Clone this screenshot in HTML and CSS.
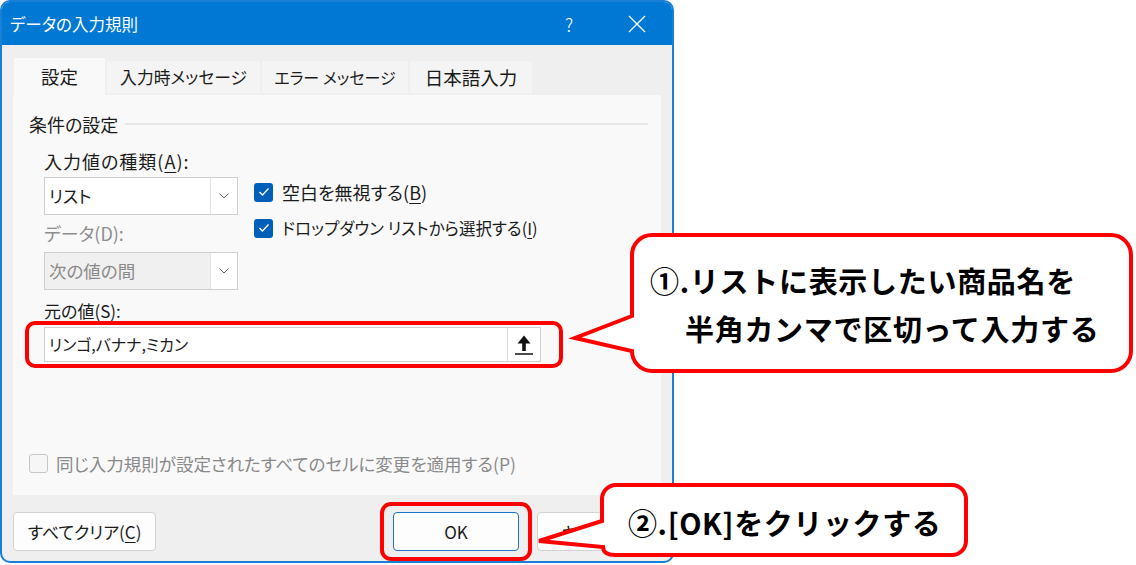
FILE: index.html
```html
<!DOCTYPE html>
<html lang="ja">
<head>
<meta charset="utf-8">
<title>データの入力規則</title>
<link rel="stylesheet" href="styles.css">
</head>
<body>
<div class="page">
  <div class="dialog">
    <div class="titlebar">
      <span class="title">データの入力規則</span>
      <span class="help">?</span>
      <span class="close"><svg width="18" height="18" viewBox="0 0 18 18"><path d="M1 1 L17 17 M17 1 L1 17" stroke="#fff" stroke-width="1.3" fill="none"/></svg></span>
    </div>
    <div class="body">
      <div class="tabs">
        <div class="tab active w1">設定</div>
        <div class="tab w2">入力時メッセージ</div>
        <div class="tab w3">エラー メッセージ</div>
        <div class="tab w4">日本語入力</div>
      </div>
      <div class="panel">
        <div class="group-title"><span>条件の設定</span><span class="rule"></span></div>
        <div class="form">
          <div class="main-row">
            <div class="left-col">
              <div class="label l1">入力値の種類(<u>A</u>):</div>
              <div class="combo c1"><span class="combo-text">リスト</span><span class="drop"><svg width="10" height="6" viewBox="0 0 10 6"><path d="M0.5 0.5 L5 5 L9.5 0.5" stroke="#606060" stroke-width="1" fill="none"/></svg></span></div>
              <div class="label disabled l2">データ(D):</div>
              <div class="combo is-disabled c2"><span class="combo-text">次の値の間</span><span class="drop"><svg width="10" height="6" viewBox="0 0 10 6"><path d="M0.5 0.5 L5 5 L9.5 0.5" stroke="#606060" stroke-width="1" fill="none"/></svg></span></div>
            </div>
            <div class="right-col">
              <div class="check-row r1"><span class="checkbox checked"><svg width="12" height="10" viewBox="0 0 12 10"><path d="M1.5 5 L4.5 8 L10.5 1.5" stroke="#fff" stroke-width="1.3" fill="none"/></svg></span><span>空白を無視する(<u>B</u>)</span></div>
              <div class="check-row r2"><span class="checkbox checked"><svg width="12" height="10" viewBox="0 0 12 10"><path d="M1.5 5 L4.5 8 L10.5 1.5" stroke="#fff" stroke-width="1.3" fill="none"/></svg></span><span>ドロップダウン リストから選択する(<u>I</u>)</span></div>
            </div>
          </div>
          <div class="label l3">元の値(<u>S</u>):</div>
          <div class="source"><span class="source-text">リンゴ,バナナ,ミカン</span><span class="ref-btn"><svg width="22" height="22" viewBox="0 0 22 22"><path d="M11 1.5 L17.5 9.5 L12.8 9.5 L12.8 17 L9.2 17 L9.2 9.5 L4.5 9.5 Z" fill="#111"/><path d="M2 20 H20" stroke="#111" stroke-width="1.5"/></svg></span></div>
        </div>
        <div class="apply-all"><span class="checkbox off"></span><span>同じ入力規則が設定されたすべてのセルに変更を適用する(P)</span></div>
      </div>
      <div class="footer">
        <button class="btn clear">すべてクリア(<u>C</u>)</button>
        <div class="btn-group"><button class="btn ok">OK</button><button class="btn cancel">キャンセル</button></div>
      </div>
    </div>
  </div>

  <svg class="overlay" width="1136" height="565" viewBox="0 0 1136 565">
    <rect x="27" y="323" width="534" height="43" rx="8" fill="none" stroke="#ff0000" stroke-width="4"/>
    <rect x="382" y="504" width="148" height="55" rx="9" fill="none" stroke="#ff0000" stroke-width="4"/>
    <path d="M652 235 H1111 A20 20 0 0 1 1131 255 V351 A20 20 0 0 1 1111 371 H652 A20 20 0 0 1 632 351 L575 338 L632 316 V255 A20 20 0 0 1 652 235 Z" fill="#fff" stroke="#ff0000" stroke-width="4"/>
    <path d="M616 485 H952 A14 14 0 0 1 966 499 V541 A14 14 0 0 1 952 555 H616 Q603 555 603 547 L539 541 L602 521 V499 A14 14 0 0 1 616 485 Z" fill="#fff" stroke="#ff0000" stroke-width="4"/>
  </svg>

  <div class="note note1">
    <div>①.リストに表示したい商品名を</div>
    <div class="indent">半角カンマで区切って入力する</div>
  </div>
  <div class="note note2">②.[OK]をクリックする</div>
</div>
</body>
</html>
```

FILE: styles.css
```css
* {
  box-sizing: border-box;
}

body {
  margin: 0;
  background: #ffffff;
  font-family: "Noto Sans CJK JP", "Noto Sans", sans-serif;
}

.page {
  position: relative;
  width: 1136px;
  height: 565px;
  overflow: hidden;
}

/* ---------- dialog window ---------- */
.dialog {
  width: 674px;
  height: 563px;
  border: 2px solid #1a7fd6;
  border-radius: 10px;
  background: #efefef;
  display: flex;
  flex-direction: column;
  overflow: hidden;
  font-feature-settings: "palt";
  color: #1b1b1b;
}

.titlebar {
  height: 43px;
  flex: none;
  background: #0078d4;
  display: flex;
  align-items: center;
  padding: 0 12px 0 8px;
  color: #ffffff;
}

.title {
  flex: 1;
  font-size: 16.5px;
  line-height: 24px;
}

.help {
  width: 46px;
  margin-right: 3px;
  text-align: center;
  font-size: 18px;
  line-height: 24px;
  font-weight: 300;
}

.close {
  width: 46px;
  margin-left: 19px;
  display: flex;
  justify-content: center;
  align-items: center;
}

.body {
  flex: 1;
  padding: 13px 11px 10px 11px;
  display: flex;
  flex-direction: column;
}

/* ---------- tabs ---------- */
.tabs {
  display: flex;
  gap: 2px;
  height: 37px;
  margin-left: 1px;
  align-items: flex-start;
}

.tab {
  height: 32px;
  margin-top: 3px;
  background: #f4f4f4;
  font-size: 17px;
  line-height: 32px;
  text-align: center;
}

.tab.active {
  height: 37px;
  margin-top: 0;
  line-height: 37px;
  background: #f9f9f9;
}

.w1 { width: 91px; font-size: 18.5px; }
.w2 { width: 153px; font-size: 16.8px; }
.w3 { width: 146px; font-size: 16px; }
.w4 { width: 122px; font-size: 18.5px; }

/* ---------- panel ---------- */
.panel {
  height: 400px;
  flex: none;
  background: #f9f9f9;
  padding: 17px 13px 20px 16px;
  display: flex;
  flex-direction: column;
}

.group-title {
  display: flex;
  align-items: center;
  gap: 7px;
  font-size: 18px;
  line-height: 24px;
}

.rule {
  flex: 1;
  height: 2px;
  background: #e6e6e6;
}

.form {
  margin-left: 15px;
}

.main-row {
  display: flex;
  gap: 16px;
  margin-top: 13px;
}

.left-col {
  width: 194px;
}

.label {
  font-size: 18px;
  line-height: 24px;
}

.l1 {
  letter-spacing: 1px;
}

.label u,
.check-row u,
.btn u {
  text-underline-offset: 3px;
  text-decoration-thickness: 1px;
}

.label.disabled {
  color: #8e8e8e;
}

.l2 {
  margin-top: 6px;
}

.l3 {
  margin-top: 9px;
  font-size: 17px;
}

.combo {
  height: 38px;
  border: 1px solid #cfcfcf;
  background: #ffffff;
  display: flex;
  align-items: stretch;
}

.c1 {
  margin-top: 4px;
}

.c2 {
  margin-top: 7px;
}

.combo-text {
  flex: 1;
  padding-left: 4px;
  font-size: 17px;
  line-height: 36px;
}

.combo.is-disabled {
  background: #f0f0f0;
  color: #8a8a8a;
}

.combo.is-disabled .combo-text {
  font-size: 17.5px;
}

.drop {
  width: 27px;
  border-left: 1px solid #e2e2e2;
  background: #ffffff;
  display: flex;
  align-items: center;
  justify-content: center;
}

.right-col {
  padding-top: 31px;
  display: flex;
  flex-direction: column;
  gap: 12px;
}

.check-row {
  display: flex;
  align-items: center;
  gap: 9px;
  height: 24px;
  line-height: 24px;
  white-space: nowrap;
}

.r1 {
  font-size: 18px;
}

.r2 {
  font-size: 16.5px;
}

.checkbox {
  width: 19px;
  height: 19px;
  flex: none;
  border-radius: 3px;
  display: flex;
  align-items: center;
  justify-content: center;
}

.checkbox.checked {
  background: #005fb8;
}

.checkbox.off {
  border: 1px solid #c6c6c6;
  background: #f6f6f6;
}

.source {
  margin-top: 4px;
  width: 497px;
  height: 35px;
  border: 1px solid #cfcfcf;
  background: #ffffff;
  display: flex;
  align-items: stretch;
}

.source-text {
  flex: 1;
  padding-left: 4px;
  font-size: 16px;
  line-height: 33px;
}

.ref-btn {
  width: 33px;
  border-left: 1px solid #dcdcdc;
  display: flex;
  align-items: center;
  justify-content: center;
}

.apply-all {
  margin-top: auto;
  display: flex;
  align-items: center;
  gap: 8px;
  height: 24px;
  color: #8a8a8a;
  font-size: 17.5px;
  white-space: nowrap;
}

/* ---------- footer buttons ---------- */
.footer {
  margin-top: 17px;
  margin-right: -2px;
  display: flex;
  justify-content: space-between;
}

.btn-group {
  display: flex;
  gap: 18px;
}

.btn {
  height: 39px;
  border: 1px solid #d2d2d2;
  border-radius: 4px;
  background: #fdfdfd;
  font-family: "Noto Sans CJK JP", "Noto Sans", sans-serif;
  font-feature-settings: "palt";
  font-size: 17px;
  color: #1b1b1b;
  padding: 0;
}

.clear {
  width: 143px;
}

.ok {
  width: 126px;
  border-color: #1f74c9;
}

.cancel {
  width: 126px;
}

/* ---------- annotation overlays ---------- */
.overlay {
  position: absolute;
  left: 0;
  top: 0;
}

.note {
  position: absolute;
  font-family: "Noto Sans CJK JP", "Noto Sans", sans-serif;
  font-weight: 700;
  font-size: 29px;
  color: #000000;
  white-space: nowrap;
}

.note1 {
  left: 650px;
  top: 256px;
  line-height: 48px;
  letter-spacing: 0.7px;
}

.note1 .indent {
  padding-left: 35px;
}

.note2 {
  left: 628px;
  top: 502px;
  line-height: 40px;
  letter-spacing: 0.6px;
}
```
